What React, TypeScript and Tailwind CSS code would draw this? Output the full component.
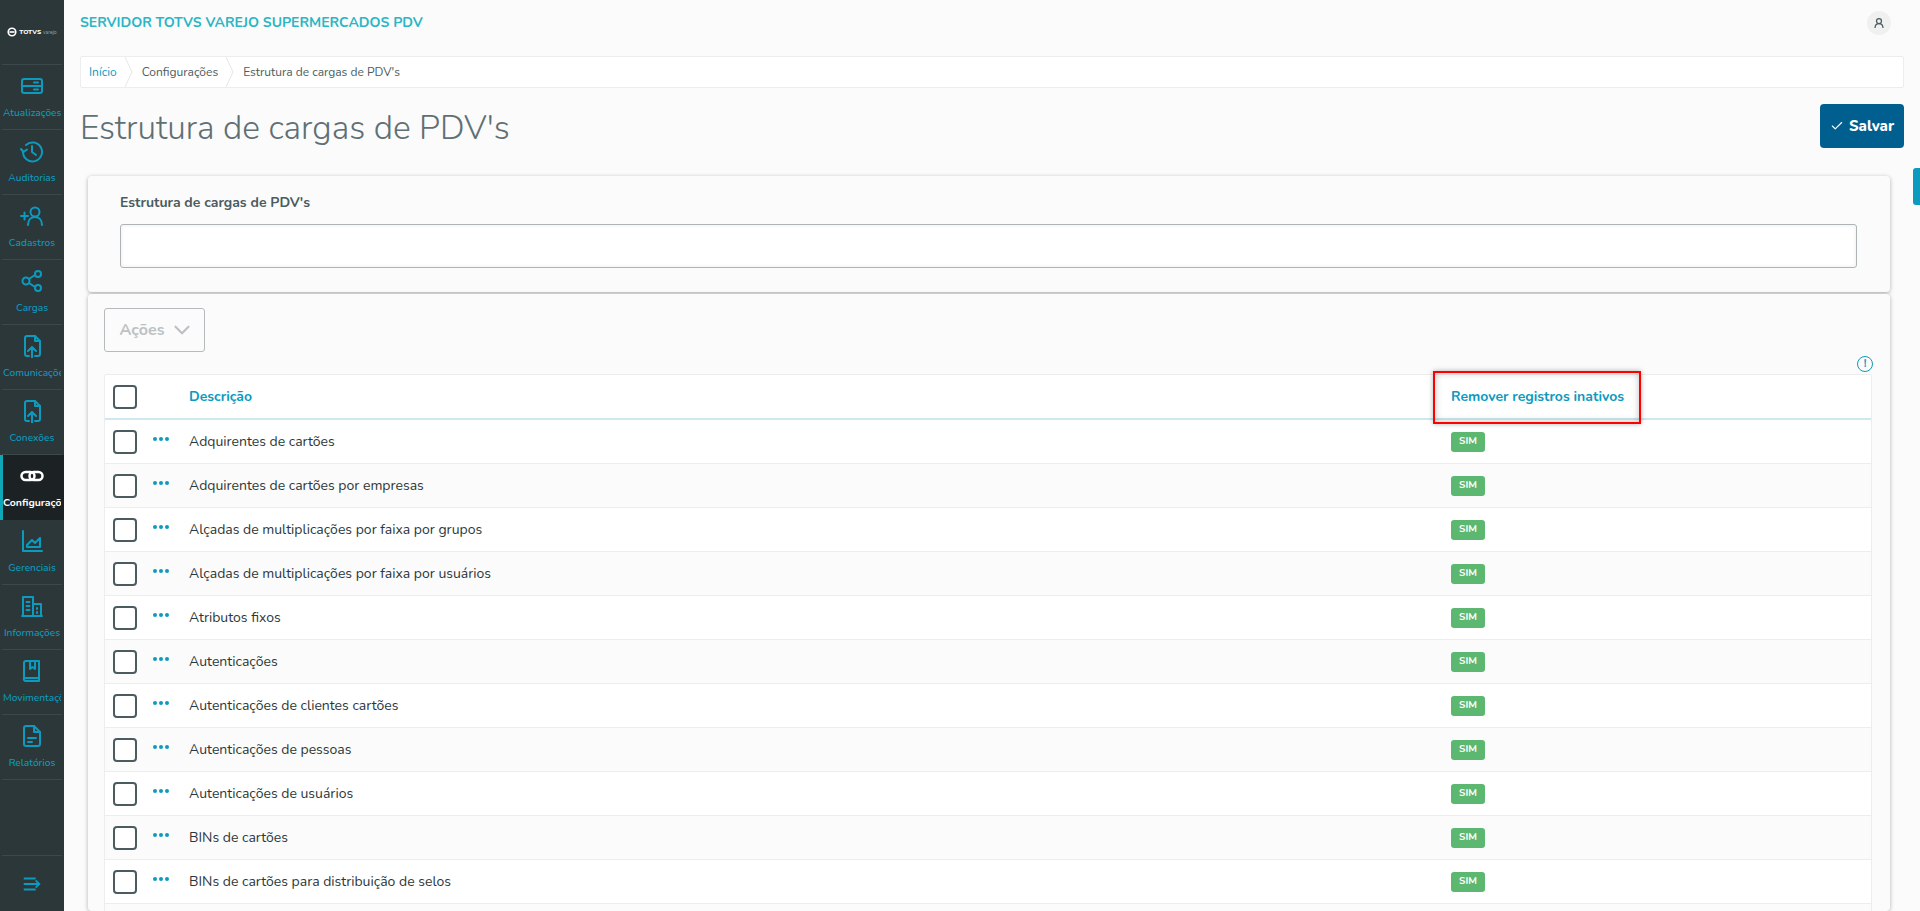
import { Check, ChevronDown } from "lucide-react";

const font = "font-['Nunito','Open_Sans','Noto_Sans',sans-serif]";

const rows = [
  "Adquirentes de cartões",
  "Adquirentes de cartões por empresas",
  "Alçadas de multiplicações por faixa por grupos",
  "Alçadas de multiplicações por faixa por usuários",
  "Atributos fixos",
  "Autenticações",
  "Autenticações de clientes cartões",
  "Autenticações de pessoas",
  "Autenticações de usuários",
  "BINs de cartões",
  "BINs de cartões para distribuição de selos",
  "",
];

function Icon({ children }: { children: React.ReactNode }) {
  return (
    <svg viewBox="0 0 24 24" width="24" height="24" fill="none" stroke="currentColor" strokeWidth="2" strokeLinecap="round" strokeLinejoin="round">
      {children}
    </svg>
  );
}

const upload = (
  <Icon>
    <path d="M9 22H7a2 2 0 0 1-2-2V4a2 2 0 0 1 2-2h8l5 5v13a2 2 0 0 1-2 2h-3" />
    <path d="M15 2v5h5" />
    <path d="M12 24V13M8 17l4-4 4 4" />
  </Icon>
);

const menu = [
  {
    label: "Atualizações",
    icon: (
      <Icon>
        <rect x="2" y="5" width="20" height="14" rx="2" />
        <path d="M2 12h20M14 8.500h4M14 15.500h4" />
      </Icon>
    ),
  },
  {
    label: "Auditorias",
    icon: (
      <Icon>
        <path d="M3 13a9.500 9.500 0 1 0 3-7" />
        <path d="M1 10l2.500 3L7 10.500M12 7v6l4 3" />
      </Icon>
    ),
  },
  {
    label: "Cadastros",
    icon: (
      <Icon>
        <circle cx="15" cy="8" r="4.500" />
        <path d="M8 21c0-5 3-8 7-8s7 3 7 8M1 12h7M4.500 8.500v7" />
      </Icon>
    ),
  },
  {
    label: "Cargas",
    icon: (
      <Icon>
        <circle cx="18" cy="5" r="3" />
        <circle cx="6" cy="12" r="3.500" />
        <circle cx="18" cy="19" r="3" />
        <path d="M9 10l6-4M9 14l6 4" />
      </Icon>
    ),
  },
  { label: "Comunicações", icon: upload },
  { label: "Conexões", icon: upload },
  {
    label: "Configurações",
    active: true,
    icon: (
      <svg viewBox="0 0 24 24" width="24" height="24" fill="none" stroke="currentColor" strokeWidth="2.500" strokeLinecap="round">
        <rect x="1.500" y="8" width="13" height="8" rx="4" />
        <rect x="9.500" y="8" width="13" height="8" rx="4" />
      </svg>
    ),
  },
  {
    label: "Gerenciais",
    icon: (
      <Icon>
        <path d="M3 2v20h19" />
        <path d="M7 18v-2l5-5 3 3 5-5v9z" />
      </Icon>
    ),
  },
  {
    label: "Informações",
    icon: (
      <Icon>
        <path d="M3 22V3h10v19M13 10h8v12M2 22h20M6.500 8h3M6.500 12h3M6.500 16h3M17 14v1M17 18v1" />
      </Icon>
    ),
  },
  {
    label: "Movimentações",
    icon: (
      <Icon>
        <path d="M4 19V4a2 2 0 0 1 2-2h13v20H6a2 2 0 0 1-2-3h15" />
        <path d="M10 2v8l2.500-2 2.500 2V2" />
      </Icon>
    ),
  },
  {
    label: "Relatórios",
    icon: (
      <Icon>
        <path d="M14 2H6a2 2 0 0 0-2 2v16a2 2 0 0 0 2 2h12a2 2 0 0 0 2-2V8z" />
        <path d="M14 2v6h6M8 14h8M8 18h4" />
      </Icon>
    ),
  },
];

function Sidebar() {
  return (
    <aside className="w-[64px] h-[911px] shrink-0 bg-[#2c3739] flex flex-col overflow-hidden">
      <div className="h-[65px] shrink-0 mx-[2px] border-b border-[#3d484a] flex items-center justify-center gap-[2px] text-white">
        <svg viewBox="0 0 12 12" width="10" height="10" fill="none" stroke="currentColor" strokeWidth="2">
          <circle cx="6" cy="6" r="4.500" />
          <path d="M3 6h6" />
        </svg>
        <span className="text-[6.500px] font-extrabold leading-none">TOTVS</span>
        <span className="text-[5px] leading-none text-[#9aa3a4]">varejo</span>
      </div>
      {menu.map((m) => (
        <div
          key={m.label}
          className={
            m.active
              ? "h-[65px] shrink-0 bg-[#1c2224] border-l-[3px] border-[#0fa6b8] text-white flex flex-col items-start overflow-hidden pt-[9px]"
              : "h-[65px] shrink-0 mx-[2px] border-b border-[#3d484a] text-[#0c9abe] flex flex-col items-center overflow-hidden pt-[9px]"
          }
        >
          <div className={m.active ? "w-[58px] flex justify-center" : "flex justify-center"}>{m.icon}</div>
          <span className={m.active ? "mt-[8px] w-[58px] text-[10.500px] leading-[14px] font-bold whitespace-nowrap overflow-hidden text-left" : "mt-[8px] w-[58px] text-[10.200px] leading-[14px] font-medium whitespace-nowrap overflow-hidden text-center"}>
            {m.label}
          </span>
        </div>
      ))}
      <div className="mt-auto mx-[2px] h-[56px] border-t border-[#3d484a] flex items-center justify-center text-[#0c9abe]">
        <svg viewBox="0 0 24 24" width="22" height="22" fill="none" stroke="currentColor" strokeWidth="2">
          <path d="M3 6h13M3 12h17M3 18h13M16 8l4 4-4 4" />
        </svg>
      </div>
    </aside>
  );
}

function Crumb({ children, first }: { children: React.ReactNode; first?: boolean }) {
  return (
    <div className={first ? "relative h-full flex items-center pl-[8px] pr-[8px] text-[#0c9abe]" : "relative h-full flex items-center pl-[17px] pr-[8px] text-[#4a5c60]"}>
      {children}
      <svg className="absolute right-[-8px] top-0" width="8" height="30" viewBox="0 0 8 30" fill="#fff" stroke="#e4e7e7">
        <path d="M0 0l7 15-7 15" />
      </svg>
    </div>
  );
}

function Checkbox() {
  return <div className="w-[24px] h-[24px] rounded-[4px] border-2 border-[#4a5c60] bg-white shrink-0" />;
}

export default function App() {
  return (
    <div className={`${font} flex h-[911px] w-full overflow-hidden bg-[#fbfbfb] relative`}>
      <Sidebar />
      <main className="flex-1 min-w-0 flex flex-col pl-[16px] pr-[16px]">
        <header className="h-[56px] shrink-0 flex items-start justify-between">
          <h2 className="mt-[14px] text-[14px] leading-[18px] font-bold text-[#29b6c5]">SERVIDOR TOTVS VAREJO SUPERMERCADOS PDV</h2>
          <div className="mt-[11px] mr-[13px] w-[24px] h-[24px] rounded-full bg-[#f0f0f0] flex items-center justify-center text-[#4a5c60]">
            <svg viewBox="0 0 24 24" width="12" height="12" fill="none" stroke="currentColor" strokeWidth="2.500">
              <circle cx="12" cy="8" r="5" />
              <path d="M4 22c0-6 3-9 8-9s8 3 8 9" />
            </svg>
          </div>
        </header>

        <nav className="h-[32px] shrink-0 bg-white border border-[#eceeee] rounded-[2px] flex items-center text-[12px]">
          <Crumb first>Início</Crumb>
          <Crumb>Configurações</Crumb>
          <div className="pl-[17px] text-[#4a5c60]">Estrutura de cargas de PDV's</div>
        </nav>

        <div className="h-[72px] mt-[16px] shrink-0 flex items-start justify-between">
          <h1 className="text-[33.500px] leading-[48px] font-light text-[#5f7075]">Estrutura de cargas de PDV's</h1>
          <button className="w-[84px] h-[44px] rounded-[4px] bg-[#005f8f] text-white flex items-center justify-center gap-[5px] text-[15px] font-extrabold">
            <Check size={14} />
            Salvar
          </button>
        </div>

        <div className="ml-[8px] mr-[14px] flex-1 min-h-0 flex flex-col gap-[2px]">
          <section className="h-[116px] shrink-0 bg-[#fbfbfb] rounded-[4px] shadow-[0_1px_4px_rgba(0,0,0,0.3)] px-[32px] pt-[18px]">
            <label className="block text-[14px] leading-[18px] font-bold text-[#4a5c60]">Estrutura de cargas de PDV's</label>
            <div className="mt-[12px] h-[44px] w-[1737px] bg-white border border-[#aeb4b5] rounded-[3px] shadow-[inset_0_0_4px_rgba(0,0,0,0.08)]" />
          </section>

          <section className="flex-1 bg-[#fbfbfb] rounded-[4px] shadow-[0_1px_4px_rgba(0,0,0,0.3)] pl-[16px] pr-[18px] pt-[14px] overflow-hidden">
            <button className="w-[101px] h-[44px] border border-[#b5bbbc] rounded-[3px] flex items-center justify-center gap-[5px] pl-[2px] text-[16px] font-bold text-[#bcc2c3]">
              Ações
              <ChevronDown size={26} strokeWidth={2} className="-mr-[4px]" />
            </button>
            <div className="h-[22px] flex items-center justify-end -mr-[1px]">
              <div className="w-[16px] h-[16px] mt-[2px] rounded-full border-[1.500px] border-[#0c9abe] text-[#0c9abe] text-[11px] font-bold leading-[13px] text-center">!</div>
            </div>
            <div className="bg-white border border-[#eceeee] rounded-[2px]">
              <div className="h-[45px] flex items-center border-b-2 border-[#cde8f0] relative">
                <div className="w-[84px] shrink-0 pl-[8px]">
                  <Checkbox />
                </div>
                <div className="w-[1262px] shrink-0 text-[14px] font-bold text-[#0c9abe]">Descrição</div>
                <div className="text-[14px] font-bold text-[#0c9abe] relative">
                  Remover registros inativos
                  <div className="absolute left-[-18px] top-[-15px] w-[208px] h-[53px] border-2 border-[#ff0000] shadow-[0_0_5px_rgba(0,0,0,0.3),inset_0_0_7px_rgba(0,0,0,0.25)]" />
                </div>
              </div>
              {rows.map((r, i) => (
                <div key={i} className={i % 2 === 0 ? "h-[44px] flex items-center border-b border-[#eceeee] bg-white" : "h-[44px] flex items-center border-b border-[#eceeee] bg-[#fbfbfb]"}>
                  <div className="w-[48px] shrink-0 pl-[8px]">
                    <Checkbox />
                  </div>
                  <div className="w-[36px] shrink-0 flex gap-[2px] mb-[5px]">
                    <span className="w-[4px] h-[4px] rounded-full bg-[#0c9abe]" />
                    <span className="w-[4px] h-[4px] rounded-full bg-[#0c9abe]" />
                    <span className="w-[4px] h-[4px] rounded-full bg-[#0c9abe]" />
                  </div>
                  <div className="w-[1262px] shrink-0 text-[14px] text-[#2c3739]">{r}</div>
                  <div className="w-[34px] h-[20px] rounded-[3px] bg-[#5cb870] text-white text-[10px] font-bold flex items-center justify-center">SIM</div>
                </div>
              ))}
            </div>
          </section>
        </div>
      </main>
      <div className="absolute right-0 top-[168px] w-[7px] h-[37px] rounded-l-[3px] bg-[#0c9abe]" />
    </div>
  );
}
